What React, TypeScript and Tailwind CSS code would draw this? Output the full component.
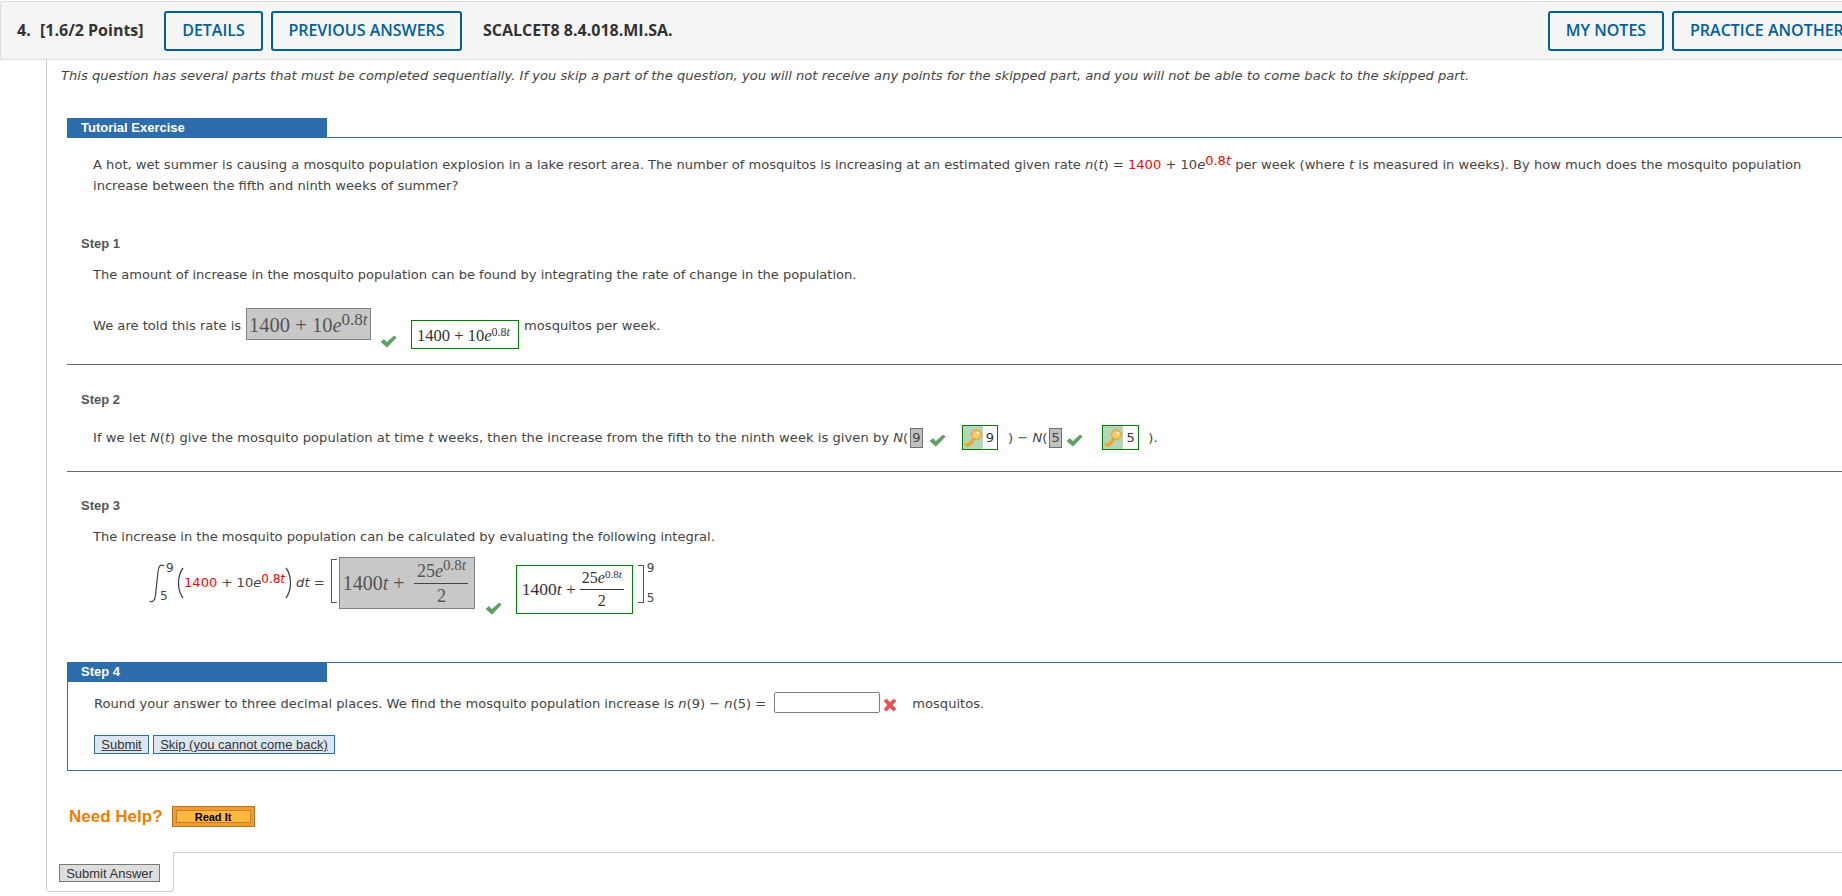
import React from "react";

const Check = ({ className = "" }: { className?: string }) => (
  <svg viewBox="0 0 17 13" width="17" height="13" className={`shrink-0 ${className}`}>
    <path d="M1 7 L4 4.5 L6.8 7.5 L14 1 L16.2 2.5 L7 12.3 Z" fill="#5ea35e" stroke="#4b8f4b" strokeWidth="0.6" />
  </svg>
);

const Key = () => (
  <svg viewBox="0 0 20 20" width="19" height="19">
    <path d="M2 17 L3.5 18.5 L5.5 18 L6 16 L8 15.5 L8.5 13.5 L10.5 11.5" fill="none" stroke="#e8a52e" strokeWidth="3" strokeLinecap="round" strokeLinejoin="round" />
    <circle cx="13" cy="7" r="5" fill="#f5c964" stroke="#d8962a" strokeWidth="1" />
    <circle cx="14.5" cy="5.5" r="1.4" fill="#fff3c8" />
  </svg>
);

const Cross = () => (
  <svg viewBox="0 0 14 14" width="14" height="14">
    <path d="M1 3 L3.5 1 L7 4.6 L10.5 1 L13 3 L9.4 7 L13 11 L10.5 13.2 L7 9.4 L3.5 13.2 L1 11 L4.6 7 Z" fill="#ea5050" stroke="#d23c3c" strokeWidth="0.5" />
  </svg>
);

const Integral = () => (
  <svg viewBox="0 0 17 39" width="17" height="39" className="shrink-0 mt-[7px]">
    <path d="M16 2 C12 -0.5 10.5 3 10 8 L7.5 31 C7 36 5 39 1.5 37" fill="none" stroke="#444" strokeWidth="1.2" />
  </svg>
);

const Paren = ({ flip = false }: { flip?: boolean }) => (
  <svg viewBox="0 0 8 32" width="8" height="32" className={`shrink-0 mt-[10px] ${flip ? "-scale-x-100" : ""}`}>
    <path d="M7 1 C1 9 1 23 7 31" fill="none" stroke="#444" strokeWidth="1.3" />
  </svg>
);

const HeadBtn = ({ children, w, cls = "" }: { children: React.ReactNode; w: string; cls?: string }) => (
  <div className={`h-10 flex items-center justify-center shrink-0 rounded-[3px] border-2 border-[#00609c] text-[#00609c] bg-[#f5f5f5] whitespace-nowrap ${w} ${cls}`}>
    {children}
  </div>
);

const I = ({ children }: { children: React.ReactNode }) => <i>{children}</i>;

const Sep = () => <div className="h-px bg-[#6b6b6b]" />;

const StepLabel = ({ children, cls = "" }: { children: React.ReactNode; cls?: string }) => (
  <div className={`ml-[14px] font-['Liberation_Sans',sans-serif] font-bold text-[13px] leading-[16px] text-[#555] ${cls}`}>{children}</div>
);

const Serif = "font-['Liberation_Serif',serif]";

const RedExp = ({ cls = "text-[13px]" }: { cls?: string }) => (
  <sup className={`text-[#f00] leading-none top-[-4px] ${cls}`}>0.8<I>t</I></sup>
);

export default function App() {
  return (
    <div className="w-[1842px] h-[896px] overflow-hidden bg-white font-['DejaVu_Sans',sans-serif] text-[13.08px] leading-[21px] text-[#444]">
      {/* header */}
      <div className="h-[60px] pt-[1px] flex flex-col">
        <div className="h-[59px] bg-[#f5f5f5] border-y border-[#dedede] border-l flex items-center pl-[16px] font-['Open_Sans',sans-serif] font-semibold text-[16px] text-[#333] overflow-hidden rounded-tl-[2px]">
          <span className="w-[23px] font-bold">4.</span>
          <span className="w-[124px] font-bold">[1.6/2 Points]</span>
          <HeadBtn w="w-[99px]">DETAILS</HeadBtn>
          <HeadBtn w="w-[191px]" cls="ml-[8px]">PREVIOUS ANSWERS</HeadBtn>
          <span className="ml-[21px] font-bold whitespace-nowrap">SCALCET8 8.4.018.MI.SA.</span>
          <div className="flex-1" />
          <HeadBtn w="w-[116px]">MY NOTES</HeadBtn>
          <HeadBtn w="w-[190px]" cls="ml-[8px] -mr-[20px] justify-start pl-[16px]">PRACTICE ANOTHER</HeadBtn>
        </div>
      </div>

      {/* body */}
      <div className="ml-[46px] h-[792px] border-l border-[#cccccc] flex flex-col">
        <div className="h-[727px] w-[1796px]">
          <div className="ml-[14px] mt-[5px] italic whitespace-nowrap tracking-[0.02px]">
            This question has several parts that must be completed sequentially. If you skip a part of the question, you will not receive any points for the skipped part, and you will not be able to come back to the skipped part.
          </div>

          <div className="ml-[20px] mt-[32px]">
            <div className="border-b border-[#2e6dab] h-[20px]">
              <div className="w-[260px] h-[20px] bg-[#2e6dab] text-white font-['Liberation_Sans',sans-serif] font-bold text-[13px] leading-[19px] pl-[14px]">Tutorial Exercise</div>
            </div>

            <div className="ml-[26px] mt-[16px] w-[1725px]">
              A hot, wet summer is causing a mosquito population explosion in a lake resort area. The number of mosquitos is increasing at an estimated given rate <I>n</I>(<I>t</I>) = <span className="text-[#f00]">1400</span> + 10<I>e</I><RedExp /> per week (where <I>t</I> is measured in weeks). By how much does the mosquito population increase between the fifth and ninth weeks of summer?
            </div>

            <StepLabel cls="mt-[40px]">Step 1</StepLabel>
            <div className="ml-[26px] mt-[12px] tracking-[-0.03px]">The amount of increase in the mosquito population can be found by integrating the rate of change in the population.</div>

            {/* Step 1 row */}
            <div className="ml-[26px] mt-[23px] h-[41px] flex items-start whitespace-nowrap">
              <span className="mt-[7px]">We are told this rate is</span>
              <div className={`ml-[5px] w-[125px] h-[32px] bg-[#c8c8c8] border border-[#808080] pl-[2px] text-[20.5px] leading-[33px] text-[#555] ${Serif}`}>
                1400 + 10<I>e</I><sup className="text-[17px] leading-none top-[-7px]">0.8<I>t</I></sup>
              </div>
              <Check className="ml-[9px] mt-[27px]" />
              <div className={`ml-[14px] mt-[12px] w-[108px] h-[29px] border border-[#008000] pl-[5px] text-[16.5px] leading-[29px] text-[#333] ${Serif}`}>
                1400 + 10<I>e</I><sup className="text-[12px] leading-none top-[-5px]">0.8<I>t</I></sup>
              </div>
              <span className="ml-[5px] mt-[7px]">mosquitos per week.</span>
            </div>
            <div className="mt-[15px]"><Sep /></div>

            <StepLabel cls="mt-[27px]">Step 2</StepLabel>
            <div className="ml-[26px] mt-[17px] h-[25px] flex items-start whitespace-nowrap">
              <span className="mt-[2px] w-[816px] tracking-[0.04px]">If we let <I>N</I>(<I>t</I>) give the mosquito population at time <I>t</I> weeks, then the increase from the fifth to the ninth week is given by <I>N</I>(</span>
              <div className="ml-[1px] mt-[3px] w-[13px] h-[20px] bg-[#c0c0c0] border border-[#707070] text-center leading-[18px]">9</div>
              <Check className="ml-[6px] mt-[9px]" />
              <div className="ml-[16px] w-[36px] h-[25px] border border-[#008000] flex">
                <div className="w-[20px] bg-[#b6d4b6] flex items-center justify-center"><Key /></div>
                <div className="flex-1 text-center leading-[23px] text-[#333]">9</div>
              </div>
              <span className="ml-[10px] mt-[2px]">) − <I>N</I>(</span>
              <div className="ml-[2px] mt-[3px] w-[13px] h-[20px] bg-[#c0c0c0] border border-[#707070] text-center leading-[18px]">5</div>
              <Check className="ml-[4px] mt-[9px]" />
              <div className="ml-[19px] w-[37px] h-[25px] border border-[#008000] flex">
                <div className="w-[20px] bg-[#b6d4b6] flex items-center justify-center"><Key /></div>
                <div className="flex-1 text-center leading-[23px] text-[#333]">5</div>
              </div>
              <span className="ml-[9px] mt-[2px]">).</span>
            </div>
            <div className="mt-[21px]"><Sep /></div>

            <StepLabel cls="mt-[26px]">Step 3</StepLabel>
            <div className="ml-[26px] mt-[12px] tracking-[-0.03px]">The increase in the mosquito population can be calculated by evaluating the following integral.</div>

            {/* Step 3 equation */}
            <div className="ml-[81px] mt-[10px] h-[57px] flex items-start whitespace-nowrap">
              <Integral />
              <div className="w-[10px] ml-[1px] h-[46px] flex flex-col justify-between text-[12px] leading-[14px] pt-[4px]">
                <span>9</span>
                <span className="-ml-[6px]">5</span>
              </div>
              <Paren />
              <span className="mt-[15px]"><span className="text-[#f00]">1400</span> + 10<I>e</I><RedExp cls="text-[12px]" /></span>
              <Paren flip />
              <span className="ml-[3px] mt-[15px]"><I>dt</I> =</span>
              <div className="ml-[6px] mt-[2px] w-[6px] h-[44px] border-l border-y border-[#555]" />
              <div className={`ml-[2px] w-[136px] h-[52px] bg-[#c8c8c8] border border-[#808080] flex items-center pl-[3px] text-[20px] text-[#555] ${Serif}`}>
                <span>1400<I>t</I> +</span>
                <div className="ml-[10px] flex flex-col items-center w-[54px] text-[18px]">
                  <div className="leading-[24px] border-b border-[#444] w-full text-center">25<I>e</I><sup className="text-[15px] leading-none top-[-7px]">0.8<I>t</I></sup></div>
                  <div className="leading-[24px]">2</div>
                </div>
              </div>
              <Check className="ml-[10px] mt-[45px]" />
              <div className={`ml-[14px] mt-[8px] w-[117px] h-[49px] border border-[#008000] flex items-center pl-[5px] text-[17.5px] text-[#333] ${Serif}`}>
                <span>1400<I>t</I> +</span>
                <div className="ml-[4px] flex flex-col items-center w-[44px] text-[16px]">
                  <div className="leading-[22px] border-b border-[#333] w-full text-center">25<I>e</I><sup className="text-[11px] leading-none top-[-5px]">0.8<I>t</I></sup></div>
                  <div className="leading-[22px]">2</div>
                </div>
              </div>
              <div className="ml-[5px] mt-[8px] w-[6px] h-[38px] border-r border-y border-[#555]" />
              <div className="ml-[3px] mt-[4px] h-[44px] flex flex-col justify-between text-[12px] leading-[14px]">
                <span>9</span>
                <span>5</span>
              </div>
            </div>

            {/* Step 4 */}
            <div className="mt-[48px] border border-[#2e6dab] border-r-0 h-[109px]">
              <div className="-mt-[1px] -ml-[1px] w-[260px] h-[20px] bg-[#2e6dab] text-white font-['Liberation_Sans',sans-serif] font-bold text-[13px] leading-[19px] pl-[14px]">Step 4</div>
              <div className="ml-[26px] mt-[10px] h-[22px] flex items-start whitespace-nowrap">
                <span className="mt-[1px]">Round your answer to three decimal places. We find the mosquito population increase is <I>n</I>(9) − <I>n</I>(5) =</span>
                <div className="ml-[8px] w-[106px] h-[21px] border border-[#808080] rounded-[2px] bg-white" />
                <div className="ml-[3px] mt-[6px]"><Cross /></div>
                <span className="ml-[15px] mt-[1px]">mosquitos.</span>
              </div>
              <div className="ml-[26px] mt-[21px] flex gap-[4px] font-['Liberation_Sans',sans-serif] text-[13px] underline">
                <div className="h-[19px] w-[55px] bg-[#dce6f1] border border-[#2e6dab] text-center leading-[17px] text-[#333]">Submit</div>
                <div className="h-[19px] w-[182px] bg-[#dce6f1] border border-[#2e6dab] text-center leading-[17px] text-[#333]">Skip (you cannot come back)</div>
              </div>
            </div>

            <div className="ml-[2px] mt-[35px] flex items-center font-['Liberation_Sans',sans-serif]">
              <span className="font-bold text-[17px] leading-[20px] text-[#f07d00]">Need Help?</span>
              <div className="ml-[9px] w-[83px] h-[21px] bg-[#f79a2e] border border-[#b5741f] p-[3px]">
                <div className="h-full border border-[#c9802a] bg-[#ffb73e] text-center text-black font-bold text-[11px] leading-[12px]">Read It</div>
              </div>
            </div>
          </div>
        </div>

        {/* bottom tab */}
        <div className="-ml-px mt-[65px] h-[40px] flex font-['Liberation_Sans',sans-serif]">
          <div className="w-[128px] h-[40px] border-x border-b border-[#cccccc] rounded-b-[4px] pl-[12px] pt-[12px]">
            <div className="w-[101px] h-[18px] bg-[#dedede] border border-[#777] text-center text-[13px] leading-[17px] text-[#333]">Submit Answer</div>
          </div>
          <div className="flex-1 border-t border-[#cccccc]" />
        </div>
      </div>
    </div>
  );
}
